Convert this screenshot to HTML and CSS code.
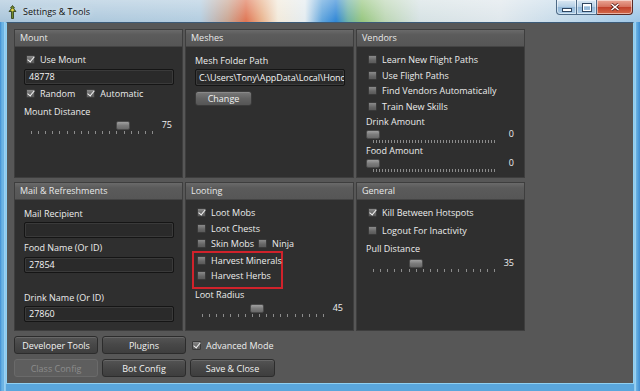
FILE: index.html
```html
<!DOCTYPE html>
<html lang="en">
<head>
  <meta charset="UTF-8">
  <title>Settings &amp; Tools</title>
  <link rel="stylesheet" href="styles.css">
</head>
<body>

  <div class="window">
    <div class="titlebar">
      <svg class="app-icon" width="9" height="14" viewBox="0 0 9 14">
        <path d="M4.5 0.5 L6.5 3 L5.5 3.5 L8 6.5 L5.5 6.5 L5.5 13.5 L3.5 13.5 L3.5 6.5 L1 6.5 L3.5 3.5 L2.5 3 Z" fill="#6f8a2a" stroke="#2f3a14" stroke-width="0.8"/>
        <circle cx="4.5" cy="5" r="1.3" fill="#e8d24a"/>
      </svg>
      <span class="title">Settings &amp; Tools</span>
      <div class="caption">
        <span class="cap-btn cap-min"><span class="glyph-min"></span></span>
        <span class="cap-btn cap-max"><span class="glyph-max"></span></span>
        <span class="cap-btn cap-close">
          <svg width="10" height="8" viewBox="0 0 10 8">
            <path d="M1.5 1 L8.5 7 M8.5 1 L1.5 7" stroke="#5a1a14" stroke-width="3"/>
            <path d="M1.5 1 L8.5 7 M8.5 1 L1.5 7" stroke="#ffffff" stroke-width="1.6"/>
          </svg>
        </span>
      </div>
    </div>

    <div class="client">
      <div class="panels">

        <section class="panel">
          <h3 class="panel-head">Mount</h3>
          <div class="panel-body">
            <div class="row check-row"><span class="check checked"></span>Use Mount</div>
            <div class="field field-mount">48778</div>
            <div class="row check-row gap-1">
              <span class="check checked"></span>Random
              <span class="check checked check-next"></span>Automatic
            </div>
            <div class="row label gap-2">Mount Distance</div>
            <div class="slider">
              <div class="track"><span class="ticks"></span><span class="thumb" style="left:75%"></span></div>
              <span class="value">75</span>
            </div>
          </div>
        </section>

        <section class="panel">
          <h3 class="panel-head">Meshes</h3>
          <div class="panel-body">
            <div class="row label">Mesh Folder Path</div>
            <div class="field field-path"><span class="path-text">C:\Users\Tony\AppData\Local\Honc</span></div>
            <button class="btn btn-light">Change</button>
          </div>
        </section>

        <section class="panel">
          <h3 class="panel-head">Vendors</h3>
          <div class="panel-body">
            <div class="row check-row"><span class="check"></span>Learn New Flight Paths</div>
            <div class="row check-row"><span class="check"></span>Use Flight Paths</div>
            <div class="row check-row"><span class="check"></span>Find Vendors Automatically</div>
            <div class="row check-row"><span class="check"></span>Train New Skills</div>
            <div class="row label label-tight">Drink Amount</div>
            <div class="slider slider-fine">
              <div class="track"><span class="ticks"></span><span class="thumb" style="left:0%"></span></div>
              <span class="value">0</span>
            </div>
            <div class="row label label-tight pull-up">Food Amount</div>
            <div class="slider slider-fine">
              <div class="track"><span class="ticks"></span><span class="thumb" style="left:0%"></span></div>
              <span class="value">0</span>
            </div>
          </div>
        </section>

        <section class="panel">
          <h3 class="panel-head">Mail &amp; Refreshments</h3>
          <div class="panel-body">
            <div class="row label">Mail Recipient</div>
            <div class="field gap-1"></div>
            <div class="row label gap-2">Food Name (Or ID)</div>
            <div class="field gap-2">27854</div>
            <div class="row label gap-wide">Drink Name (Or ID)</div>
            <div class="field gap-1">27860</div>
          </div>
        </section>

        <section class="panel">
          <h3 class="panel-head">Looting</h3>
          <div class="panel-body">
            <div class="row check-row"><span class="check checked"></span>Loot Mobs</div>
            <div class="row check-row"><span class="check"></span>Loot Chests</div>
            <div class="row check-row">
              <span class="check"></span>Skin Mobs
              <span class="check check-near"></span>Ninja
            </div>
            <div class="highlight">
              <div class="row check-row"><span class="check"></span>Harvest Minerals</div>
              <div class="row check-row"><span class="check"></span>Harvest Herbs</div>
            </div>
            <div class="row label pull-up-2">Loot Radius</div>
            <div class="slider">
              <div class="track"><span class="ticks"></span><span class="thumb" style="left:45%"></span></div>
              <span class="value">45</span>
            </div>
          </div>
        </section>

        <section class="panel">
          <h3 class="panel-head">General</h3>
          <div class="panel-body">
            <div class="row check-row"><span class="check checked"></span>Kill Between Hotspots</div>
            <div class="row check-row gap-2"><span class="check"></span>Logout For Inactivity</div>
            <div class="row label gap-2">Pull Distance</div>
            <div class="slider gap-1">
              <div class="track"><span class="ticks"></span><span class="thumb" style="left:35%"></span></div>
              <span class="value">35</span>
            </div>
          </div>
        </section>

      </div>

      <div class="actions">
        <button class="btn">Developer Tools</button>
        <button class="btn">Plugins</button>
        <div class="row check-row advanced"><span class="check checked"></span>Advanced Mode</div>
        <button class="btn" disabled>Class Config</button>
        <button class="btn">Bot Config</button>
        <button class="btn">Save &amp; Close</button>
      </div>
    </div>
  </div>

</body>
</html>
```

FILE: styles.css
```css
body {
  margin: 0;
  padding: 0;
  font-family: "Open Sans", "Noto Sans", sans-serif;
  font-size: 9px;
  background: #5aa6dc;
}

.window {
  width: 640px;
  height: 391px;
  display: flex;
  flex-direction: column;
  box-sizing: border-box;
  padding-bottom: 7px;
  background:
    linear-gradient(to bottom, rgba(255,255,255,0.35), rgba(255,255,255,0) 22px) top / 100% 22px no-repeat,
    linear-gradient(to right, #a9c5da 0, #b3cde0 200px, #c9a592 228px, #df7452 246px, #e9b48e 262px, #f2eadb 278px, #e4ecf0 305px, #5fa4dc 322px, #2f86d6 336px, #6fb2a6 348px, #96c67e 362px, #bcd6b4 385px, #d6e2e4 420px, #dfe7ec 500px, #c6dbea 560px, #9cc6e6 640px) top / 100% 22px no-repeat,
    linear-gradient(to right, #3e8dd2, #6cb4e4 2px, #6cb4e4 4px, #c4ecff 5px, #5aa6dc 6px, #5aa6dc 634px, #c4ecff 635px, #6cb4e4 636px, #3e8dd2);
}

/* title bar */

.titlebar {
  height: 22px;
  display: flex;
  align-items: center;
  padding-left: 8px;
  flex-shrink: 0;
}

.app-icon {
  margin-top: 1px;
}

.title {
  margin-left: 6px;
  font-size: 9px;
  color: #101010;
  text-shadow: 0 0 6px rgba(255,255,255,0.9);
}

.caption {
  margin-left: auto;
  margin-right: 7px;
  align-self: flex-start;
  display: flex;
}

.cap-btn {
  height: 15px;
  display: flex;
  align-items: center;
  justify-content: center;
  border: 1px solid #4d6a86;
  border-top: none;
  box-sizing: border-box;
  background: linear-gradient(#dbe8f3, #b4cfe5 50%, #94b8d8 51%, #a9cbe6);
  box-shadow: inset 0 0 0 1px rgba(255,255,255,0.5);
}

.cap-min {
  width: 21px;
  border-radius: 0 0 0 4px;
}

.cap-max {
  width: 20px;
  border-left: none;
}

.cap-close {
  width: 36px;
  border-left: none;
  border-color: #5a2a24;
  border-radius: 0 0 4px 0;
  background: linear-gradient(#eaa695, #d4705c 50%, #c0402a 51%, #d46a4a);
}

.glyph-min {
  width: 8px;
  height: 2px;
  margin-top: 5px;
  background: #fff;
  border: 1px solid #2f4660;
}

.glyph-max {
  width: 6px;
  height: 4px;
  border: 1px solid #fff;
  border-top-width: 2px;
  outline: 1px solid #2f4660;
}

/* client area */

.client {
  flex: 1;
  margin: 0 6px;
  background: #575757;
  border: 1px solid #8fd0f2;
  border-top-color: #3c5b78;
  padding: 6px 0 0 7px;
  color: #ececec;
}

.panels {
  display: grid;
  grid-template-columns: repeat(3, 169px);
  grid-template-rows: repeat(2, 149px);
  gap: 4px 2px;
}

.panel {
  background: #2f2f2f;
  border: 1px solid #3e3e3e;
  box-sizing: border-box;
  display: flex;
  flex-direction: column;
}

.panel-head {
  margin: 0;
  height: 16px;
  line-height: 16px;
  padding-left: 5px;
  font-size: 9px;
  font-weight: normal;
  color: #e8e8e8;
  background: linear-gradient(#6a6a6a, #5b5b5b 30%, #565656);
  border-bottom: 1px solid #444;
}

.panel-body {
  padding: 5px 9px 0 9px;
}

.row {
  height: 15.5px;
  display: flex;
  align-items: center;
  white-space: nowrap;
}

.check-row {
  padding-left: 2px;
}

.label {
  padding-top: 1px;
  box-sizing: border-box;
}

.label-tight {
  height: 14px;
}

.gap-1 { margin-top: 1px; }
.gap-2 { margin-top: 2px; }
.gap-wide { margin-top: 16px; }
.pull-up { margin-top: -1px; }
.pull-up-2 { margin-top: -2px; }

.check {
  position: relative;
  width: 9px;
  height: 9px;
  box-sizing: border-box;
  margin-right: 5px;
  flex-shrink: 0;
  border: 1px solid #3a3a3a;
  border-radius: 1px;
  background: linear-gradient(#8a8a8a, #666 60%, #5a5a5a);
}

.check.checked::after {
  content: "";
  position: absolute;
  left: 2px;
  top: -1px;
  width: 3px;
  height: 6px;
  border-right: 1.5px solid #f4f4f4;
  border-bottom: 1.5px solid #f4f4f4;
  transform: rotate(40deg);
}

.check-next {
  margin-left: 11px;
}

.check-near {
  margin-left: 4px;
}

.field {
  width: 150px;
  height: 16px;
  box-sizing: border-box;
  border: 1px solid #151515;
  border-radius: 2px;
  background: #2a2a2a;
  box-shadow: inset 0 0 0 1px #3a3a3a;
  padding-left: 4px;
  line-height: 14px;
  color: #f4f4f4;
  white-space: nowrap;
  overflow: hidden;
}

.field-mount {
  margin-top: 1px;
}

.field-path {
  margin-top: 1.5px;
  height: 17px;
  line-height: 15px;
  padding-left: 3px;
}

.path-text {
  letter-spacing: -0.1px;
}

/* sliders */

.slider {
  height: 16px;
  display: flex;
  padding-right: 1px;
}

.track {
  position: relative;
  width: 122px;
  margin-left: 7px;
}

.ticks {
  position: absolute;
  left: 0;
  right: 0;
  top: 12px;
  height: 3px;
  background: repeating-linear-gradient(to right, #8c8c8c 0 1px, transparent 1px 7.12px);
}

.slider-fine .ticks {
  background: repeating-linear-gradient(to right, #8c8c8c 0 1px, transparent 1px 3.03px);
}

.thumb {
  position: absolute;
  top: 2px;
  width: 14px;
  height: 9px;
  margin-left: -7px;
  box-sizing: border-box;
  border: 1px solid #4a4a4a;
  border-radius: 2px;
  background: linear-gradient(#a0a0a0, #7c7c7c 50%, #6a6a6a);
}

.value {
  margin-left: auto;
  line-height: 12px;
  color: #f0f0f0;
}

/* buttons */

.btn {
  font-family: inherit;
  font-size: 9px;
  color: #f2f2f2;
  padding: 0;
  border: 1px solid #2c2c2c;
  border-radius: 3px;
  background: linear-gradient(#545454, #474747 50%, #3e3e3e);
  box-shadow: inset 0 1px 0 rgba(255,255,255,0.12);
}

.btn-light {
  margin-top: 5px;
  width: 57px;
  height: 15px;
  background: linear-gradient(#7a7a7a, #626262 50%, #555);
  border-color: #3a3a3a;
}

.btn:disabled {
  color: #8c8c8c;
  background: #5e5e5e;
  border-color: #6a6a6a;
  box-shadow: none;
}

.highlight {
  width: 91px;
  box-sizing: border-box;
  margin: -1px 0 0 -3px;
  padding: 0 0 3px 1px;
  border: 2px solid #d0222b;
}

.actions {
  margin-top: 5px;
  display: grid;
  grid-template-columns: 84px 84px 85px;
  grid-template-rows: 18px 18px;
  gap: 5px 4px;
}

.advanced {
  height: 18px;
}
```
